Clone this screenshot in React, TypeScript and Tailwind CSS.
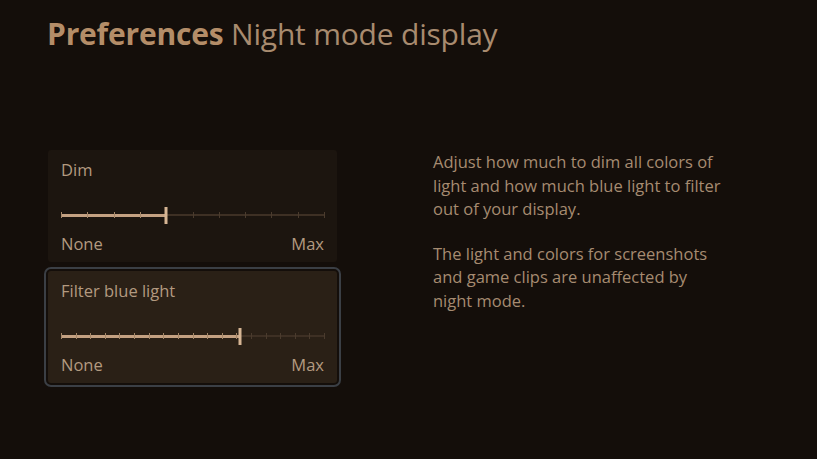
import React from "react";

type SliderProps = { ticks: number; value: number };

function TickSlider({ ticks, value }: SliderProps) {
  const marks = Array.from({ length: ticks + 1 }, (_, i) => (i / ticks) * 100);
  return (
    <div className="relative h-5 w-full">
      <div className="absolute left-0 right-0 top-[9px] h-[2px] bg-[#3e3024]" />
      <div
        className="absolute left-0 top-[9px] h-[3px] bg-[#c4a182]"
        style={{ width: `${value}%` }}
      />
      {marks.map((p, i) => (
        <div
          key={i}
          className={`absolute top-[7px] h-[6px] w-px ${p <= value ? "bg-[#a68869]" : "bg-[#4a3b2d]"}`}
          style={{ left: `${p}%` }}
        />
      ))}
      <div
        className="absolute top-[2px] h-[17px] w-[3px] -translate-x-1/2 bg-[#d6b594]"
        style={{ left: `${value}%` }}
      />
    </div>
  );
}

function SliderCard({
  label,
  ticks,
  value,
  focused,
}: {
  label: string;
  ticks: number;
  value: number;
  focused?: boolean;
}) {
  return (
    <div
      className={`flex flex-col rounded-[3px] px-[13px] pt-2 pb-[6px] ${
        focused
          ? "bg-[#2a2016] outline-2 outline-offset-2 outline-[#3b3f45]"
          : "bg-[#1c150f]"
      }`}
    >
      <div className="h-6 leading-6 text-[#b39a80]">{label}</div>
      <div className="mt-[23px]">
        <TickSlider ticks={ticks} value={value} />
      </div>
      <div className="mt-[7px] flex h-6 justify-between leading-6 text-[#b39a80]">
        <span>None</span>
        <span>Max</span>
      </div>
    </div>
  );
}

export default function App() {
  return (
    <div
      className="h-[459px] w-[817px] overflow-hidden bg-[#140e0a] pl-[47px] pt-[14px]"
      style={{ fontFamily: '"Open Sans", "Liberation Sans", sans-serif' }}
    >
      <h1 className="text-[30px] leading-[40px] tracking-[-0.2px] text-[#a88b6f]">
        <span className="font-bold text-[#b48d68]">Preferences</span>{" "}
        <span>Night mode display</span>
      </h1>
      <div className="mt-[96px] flex gap-[96px]">
        <div className="flex w-[290px] flex-col gap-[9px] pl-px text-[16.5px]">
          <SliderCard label="Dim" ticks={10} value={40} />
          <SliderCard label="Filter blue light" ticks={18} value={68} focused />
        </div>
        <div className="w-[296px] text-[16.5px] leading-[23.5px] text-[#a68b71]">
          <p>
            Adjust how much to dim all colors of light and how much blue light
            to filter out of your display.
          </p>
          <p className="mt-[21px]">
            The light and colors for screenshots and game clips are unaffected
            by night mode.
          </p>
        </div>
      </div>
    </div>
  );
}
